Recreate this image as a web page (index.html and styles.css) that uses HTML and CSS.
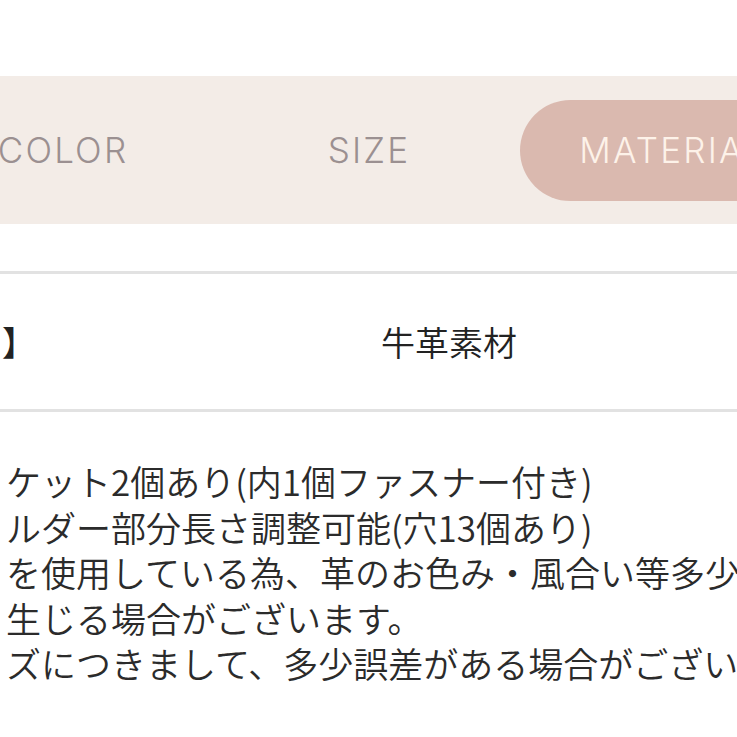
FILE: index.html
```html
<!DOCTYPE html>
<html lang="ja">
<head>
<meta charset="utf-8">
<link rel="stylesheet" href="styles.css">
</head>
<body>
<div class="page">
  <div class="tabs-wrap">
    <div class="tabs">
      <div class="tab">COLOR</div>
      <div class="tab">SIZE</div>
      <div class="tab active">MATERIAL</div>
    </div>
  </div>
  <div class="spec">
    <div class="spec-row">
      <div class="spec-label">】</div>
      <div class="spec-value">牛革素材</div>
    </div>
  </div>
  <div class="notes">
    <p class="note">ケット2個あり(内1個ファスナー付き)</p>
    <p class="note">ルダー部分長さ調整可能(穴13個あり)</p>
    <p class="note">を使用している為、革のお色み・風合い等多少</p>
    <p class="note">生じる場合がございます。</p>
    <p class="note">ズにつきまして、多少誤差がある場合がございます。</p>
  </div>
</div>
</body>
</html>
```
FILE: styles.css
```css
html, body {
  margin: 0;
  padding: 0;
  background: #ffffff;
  overflow: hidden;
}
.page {
  width: 737px;
  height: 737px;
  overflow: hidden;
  padding-top: 76px;
  box-sizing: border-box;
}
.tabs-wrap {
  height: 148px;
  background: #f3ece7;
  overflow: hidden;
  display: flex;
  align-items: center;
}
.tabs {
  display: flex;
  margin-left: -90px;
  flex-shrink: 0;
}
.tab {
  width: 306px;
  height: 101px;
  flex-shrink: 0;
  display: flex;
  align-items: center;
  justify-content: center;
  font-family: Inter, "Open Sans", sans-serif;
  font-weight: 300;
  font-size: 35px;
  letter-spacing: 2.2px;
  color: #9b9091;
  border-radius: 51px;
}
.tab.active {
  background: #dab9af;
  color: #fdf2e9;
  margin-left: -2px;
}
.spec {
  margin-top: 47px;
  border-top: 3px solid #e2e2e2;
  border-bottom: 3px solid #e2e2e2;
}
.spec-row {
  height: 135px;
  display: flex;
  align-items: center;
  font-family: "Noto Sans CJK JP", sans-serif;
  font-size: 34px;
  font-weight: 350;
  color: #222222;
}
.spec-label {
  width: 380px;
  margin-left: 2px;
  font-weight: 400;
}
.spec-value {
  margin-left: -1px;
}
.notes {
  padding-top: 46px;
  padding-left: 6px;
  font-family: "Noto Sans CJK JP", sans-serif;
  font-size: 35px;
  font-weight: 350;
  line-height: 45.5px;
  color: #2b2b2b;
}
.note {
  margin: 0;
  white-space: nowrap;
}
```
